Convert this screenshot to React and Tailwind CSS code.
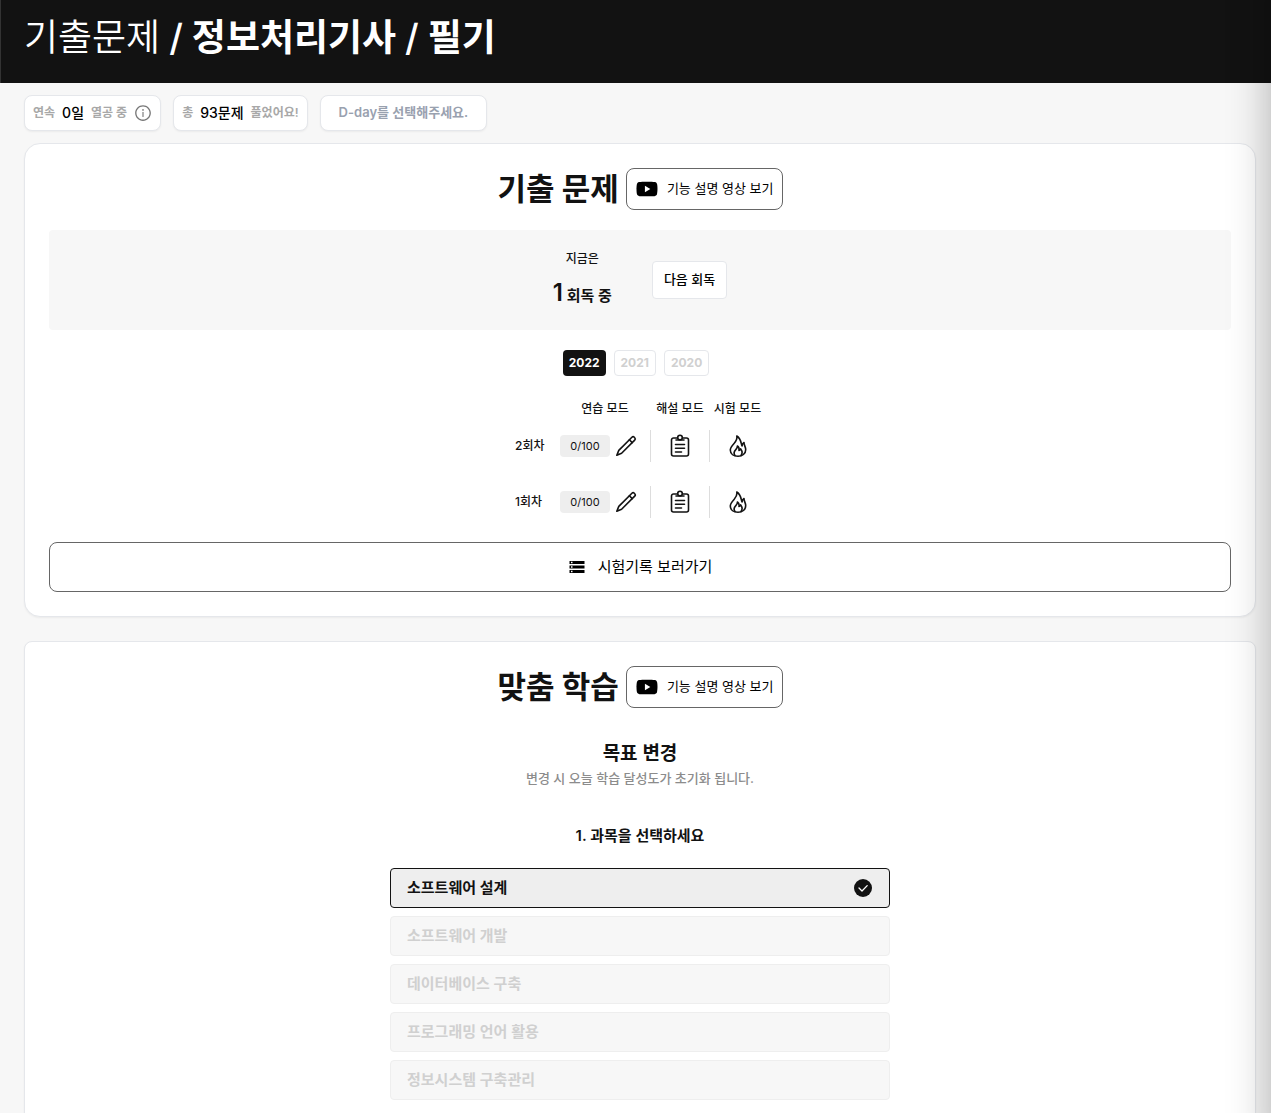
import { useState } from "react";
import { AiFillYoutube, AiOutlineInfoCircle } from "react-icons/ai";
import { MdStorage } from "react-icons/md";

const YEARS = ["2022", "2021", "2020"];

const ROUNDS = [
  { id: 2, label: "2회차", solved: 0, total: 100 },
  { id: 1, label: "1회차", solved: 0, total: 100 },
];

const SUBJECTS = [
  "소프트웨어 설계",
  "소프트웨어 개발",
  "데이터베이스 구축",
  "프로그래밍 언어 활용",
  "정보시스템 구축관리",
];

function PencilIcon() {
  return (
    <svg width="24" height="24" viewBox="0 0 24 24" fill="none" stroke="currentColor" strokeWidth="1.6" strokeLinecap="round" strokeLinejoin="round">
      <path d="M2.8 21.2 4.8 16.4 17.9 3.3a1.7 1.7 0 0 1 2.4 0l.4.4a1.7 1.7 0 0 1 0 2.4L7.6 19.2Z" />
      <path d="m15.4 5.8 2.8 2.8" />
    </svg>
  );
}

function ClipboardIcon() {
  return (
    <svg width="24" height="24" viewBox="0 0 24 24" fill="none" stroke="currentColor" strokeWidth="1.6" strokeLinecap="round" strokeLinejoin="round">
      <path d="M9.5 4h-4a2 2 0 0 0-2 2v14a2 2 0 0 0 2 2h13a2 2 0 0 0 2-2V6a2 2 0 0 0-2-2h-4" />
      <circle cx="12" cy="3.6" r="2.3" />
      <path d="M8 6h8M7.5 10.5h9M7.5 14.3h9M7.5 18h6" />
    </svg>
  );
}

function FlameIcon() {
  return (
    <svg width="24" height="24" viewBox="0 0 24 24" fill="none" stroke="currentColor" strokeWidth="1.6" strokeLinecap="round" strokeLinejoin="round">
      <path d="M10.8 2c.8 3.2-.8 5.2-2.6 7.3C6.1 11.6 4.3 13.4 4.3 16c0 4 3.5 6.3 7.7 6.3s7.7-2.6 7.7-6.6c0-2.9-1.7-4.2-1.7-7.2-1.3.7-1.9 2-1.9 3.500C14.9 10.8 15.8 5 10.8 2Z" />
      <path d="M9 21.500c-1.7-2.3-.8-4.3.8-5.9 1.2-1.2 1.7-2 1.6-3.6 1.6 1.2 2 2.7 1.6 4.500.9-.2 1.5-.8 1.7-1.6 1.6 2.2 1.8 4.7.3 6.6" />
    </svg>
  );
}

function CheckIcon() {
  return (
    <svg width="20" height="20" viewBox="0 0 20 20" fill="none">
      <circle cx="10" cy="10" r="9" fill="#121212" />
      <path d="m6 10 3 3 5.2-5.4" stroke="white" strokeWidth="1.3" strokeLinecap="round" strokeLinejoin="round" />
    </svg>
  );
}

function StatChip({ before, value, after, children }) {
  return (
    <div className="flex h-9 items-center gap-[7px] rounded-lg border border-gray-200 bg-white px-2 text-xs font-semibold text-[#a8a8a8] shadow-xs">
      <span>{before}</span>
      <span className="text-sm font-medium text-black">{value}</span>
      <span>{after}</span>
      {children}
    </div>
  );
}

function SectionTitle({ title }) {
  return (
    <div className="flex items-center justify-center gap-[7px]">
      <h2 className="text-[31px] leading-10 font-bold">{title}</h2>
      <button type="button" className="flex h-[42px] items-center gap-2 rounded-lg border border-[#666] px-2 text-[13px] text-black">
        <AiFillYoutube size={24} />
        기능 설명 영상 보기
      </button>
    </div>
  );
}

export default function App() {
  const [year, setYear] = useState("2022");
  const [subject, setSubject] = useState(SUBJECTS[0]);

  return (
    <div lang="ko" className="relative min-h-screen overflow-hidden bg-[#f7f7f7] pb-6 font-['Inter','Noto_Sans_CJK_KR',sans-serif] text-[#121212]">
      <header className="border-l border-[#333] bg-[#121212] px-[23px] pt-[14px] pb-[21px] text-white">
        <h1 className="flex gap-[9px] text-[37px] leading-[48px] font-medium">
          <span className="font-[350]">기출문제</span>
          <span>/</span>
          <b className="font-bold">정보처리기사</b>
          <span>/</span>
          <b className="font-bold">필기</b>
        </h1>
      </header>

      <main className="pt-3 pr-[15px] pl-6">
        <div className="flex gap-3">
          <StatChip before="연속" value="0일" after="열공 중">
            <button type="button" aria-label="연속 학습 안내" className="text-[#777]">
              <AiOutlineInfoCircle size={18} />
            </button>
          </StatChip>
          <StatChip before="총" value="93문제" after="풀었어요!" />
          <button type="button" className="h-9 rounded-lg border border-gray-200 bg-white px-[18px] text-[13px] font-semibold text-gray-400 shadow-xs">
            D-day를 선택해주세요.
          </button>
        </div>

        <section className="mt-3 rounded-2xl border border-gray-200 bg-white p-6 shadow-xs">
          <SectionTitle title="기출 문제" />

          <div className="mt-5 flex h-[100px] items-center justify-center gap-10 rounded bg-[#f7f7f7]">
            <div className="text-center">
              <p className="text-xs leading-5 font-medium">지금은</p>
              <p className="mt-2 text-[15px] leading-8 font-semibold">
                <span className="text-2xl">1</span> 회독 중
              </p>
            </div>
            <button type="button" className="h-[38px] rounded border border-gray-200 bg-white px-[11px] text-[13px] font-medium text-black">
              다음 회독
            </button>
          </div>

          <div className="mt-5 flex justify-center">
            {YEARS.map((y) => (
              <button
                key={y}
                type="button"
                onClick={() => setYear(y)}
                className={`mr-2 h-[26px] rounded px-1.5 text-xs font-bold ${
                  y === year ? "bg-[#121212] text-white" : "border border-gray-200 bg-white text-[#d0d0d0]"
                }`}
              >
                {y}
              </button>
            ))}
          </div>

          <table className="mx-auto mt-6 w-[250px] table-fixed text-xs font-medium">
            <thead>
              <tr className="h-[18px] whitespace-nowrap">
                <td className="w-[45px]" />
                <th scope="col" className="w-[90px] font-medium">연습 모드</th>
                <th scope="col" className="w-[60px] font-medium">해설 모드</th>
                <th scope="col" className="w-[55px] font-medium">시험 모드</th>
              </tr>
            </thead>
            <tbody>
              {ROUNDS.map((round) => (
                <tr key={round.id} className="h-14">
                  <th scope="row" className="text-left font-medium whitespace-nowrap">{round.label}</th>
                  <td>
                    <div className="flex h-8 items-center gap-1">
                      <span className="flex h-[22px] w-[50px] items-center justify-center rounded bg-[#eee] text-[11px] font-normal">
                        {round.solved}/{round.total}
                      </span>
                      <button type="button" aria-label={`${round.label} 연습 모드`}>
                        <PencilIcon />
                      </button>
                    </div>
                  </td>
                  <td>
                    <div className="flex h-8 items-center justify-center border-x border-[#ddd]">
                      <button type="button" aria-label={`${round.label} 해설 모드`}>
                        <ClipboardIcon />
                      </button>
                    </div>
                  </td>
                  <td>
                    <div className="flex h-8 items-center justify-center">
                      <button type="button" aria-label={`${round.label} 시험 모드`}>
                        <FlameIcon />
                      </button>
                    </div>
                  </td>
                </tr>
              ))}
            </tbody>
          </table>

          <button type="button" className="mt-3 flex h-[50px] w-full items-center justify-center gap-3 rounded-lg border border-[#666] text-[15px] text-black">
            <MdStorage size={18} />
            시험기록 보러가기
          </button>
        </section>

        <section className="mt-6 rounded-lg border border-gray-200 bg-white p-6 shadow-xs">
          <SectionTitle title="맞춤 학습" />

          <div className="mt-8 text-center">
            <h3 className="text-[19px] leading-7 font-semibold">목표 변경</h3>
            <p className="text-[13px] leading-5 font-medium text-[#8c8c8c]">변경 시 오늘 학습 달성도가 초기화 됩니다.</p>
          </div>

          <h4 className="mt-9 text-center text-[15px] leading-6 font-semibold">1. 과목을 선택하세요</h4>

          <div className="mx-auto mt-5 flex max-w-[500px] flex-col gap-2">
            {SUBJECTS.map((name) => (
              <button
                key={name}
                type="button"
                aria-pressed={name === subject}
                onClick={() => setSubject(name)}
                className={`flex h-10 items-center justify-between rounded border px-4 text-[15px] font-semibold ${
                  name === subject ? "border-[#121212] bg-[#eee]" : "border-[#eee] bg-[#f7f7f7] text-[#d0d0d0]"
                }`}
              >
                {name}
                {name === subject ? <CheckIcon /> : null}
              </button>
            ))}
          </div>
        </section>
      </main>

      {/* closed side drawer, only its shadow reaches into the page */}
      <aside className="pointer-events-none fixed -inset-y-10 left-full w-64 bg-white shadow-[0_0_40px_rgba(0,0,0,0.3)]" />
    </div>
  );
}
